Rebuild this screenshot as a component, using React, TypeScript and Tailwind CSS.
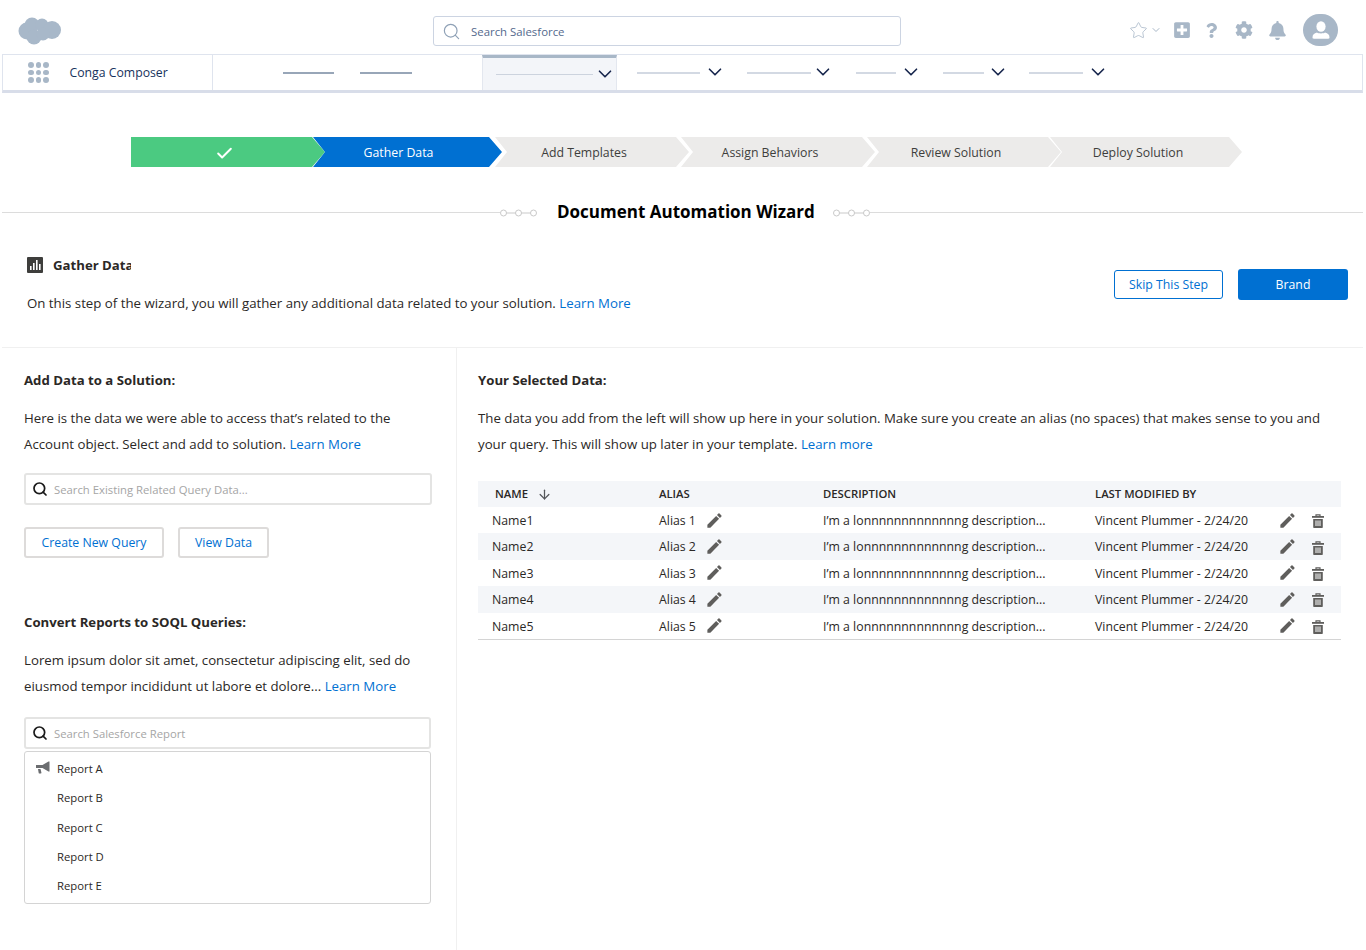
import { ArrowDown, Check, ChevronDown, Search, Star } from "lucide-react";
import { FaBell, FaCog, FaPlusSquare, FaQuestion } from "react-icons/fa";
import { MdEdit } from "react-icons/md";

const navItems = [
  { line: 97, ml: "", chevron: "ml-[1px]", active: true },
  { line: 63, ml: "ml-[20px]", chevron: "ml-[4px]" },
  { line: 64, ml: "ml-[21px]", chevron: "ml-[1px]" },
  { line: 40, ml: "ml-[22px]", chevron: "ml-[4px]" },
  { line: 41, ml: "ml-[21px]", chevron: "ml-[3px]" },
  { line: 54, ml: "ml-[20px]", chevron: "ml-[4px]" },
];

const steps = [
  { label: "", w: "w-[194px]", ml: "ml-[131px]", cls: "bg-[#4bca81] text-white pr-[8px]", first: true },
  { label: "Gather Data", w: "w-[189px]", ml: "-ml-[12px]", cls: "bg-[#0070d2] text-white pr-[18px]" },
  { label: "Add Templates", w: "w-[194px]", ml: "-ml-[7px]", cls: "bg-[#ecebea] text-[#3e3e3c] pr-[16px]" },
  { label: "Assign Behaviors", w: "w-[194px]", ml: "-ml-[8px]", cls: "bg-[#ecebea] text-[#3e3e3c] pr-[16px]" },
  { label: "Review Solution", w: "w-[194px]", ml: "-ml-[8px]", cls: "bg-[#ecebea] text-[#3e3e3c] pr-[16px]" },
  { label: "Deploy Solution", w: "w-[192px]", ml: "-ml-[11px]", cls: "bg-[#ecebea] text-[#3e3e3c] pr-[16px]" },
];

const rows = [
  { name: "Name1", alias: "Alias 1" },
  { name: "Name2", alias: "Alias 2" },
  { name: "Name3", alias: "Alias 3" },
  { name: "Name4", alias: "Alias 4" },
  { name: "Name5", alias: "Alias 5" },
];

function CloudLogo() {
  return (
    <svg width="44" height="28" viewBox="0 0 44 28" fill="#a8b8c9">
      <circle cx="9" cy="14" r="8.5" />
      <circle cx="14" cy="8" r="7.5" />
      <circle cx="24" cy="8" r="6.5" />
      <circle cx="34" cy="13" r="9" />
      <circle cx="16" cy="20" r="7.5" />
      <circle cx="25" cy="17" r="6.5" />
    </svg>
  );
}

function Waffle() {
  return (
    <div className="grid grid-cols-3 gap-[2px]">
      {Array.from({ length: 9 }).map((_, i) => (
        <span key={i} className="h-[5.5px] w-[5.5px] rounded-full bg-[#a8b7c7]" />
      ))}
    </div>
  );
}

function Ornament() {
  return (
    <svg width="37" height="8" viewBox="0 0 37 8" fill="none" stroke="#c9c9c9" className="mt-[2px]">
      <circle cx="3.500" cy="4" r="3" />
      <circle cx="18.500" cy="4" r="3" />
      <circle cx="33.500" cy="4" r="3" />
      <path d="M6.500 4h9M21.500 4h9" />
    </svg>
  );
}

function ChartIcon() {
  return (
    <svg width="16" height="16" viewBox="0 0 16 16">
      <rect width="16" height="16" rx="1" fill="#3e3e3c" />
      <path d="M3 9h1.600v4H3zM6 6h1.600v7H6zM9 3h1.600v10H9zM12 7h1.600v6H12z" fill="#fff" />
    </svg>
  );
}

function BullhornIcon() {
  return (
    <svg width="14" height="14" viewBox="0 0 14 14" fill="#6b6d70" className="-mt-[3px]">
      <path d="M0 4h6.500L12.500.5h1v10h-1L6.500 7H0z" />
      <path d="M2 8h2.500l.9 3.500a.8.8 0 0 1-.8 1H3.500a.8.8 0 0 1-.8-.6z" />
    </svg>
  );
}

function TrashIcon() {
  return (
    <svg width="12" height="14" viewBox="0 0 12 14" className="ml-[15px]">
      <path d="M4 2V.8h4V2" fill="none" stroke="#5f5e5c" strokeWidth="1.200" />
      <rect y="2" width="12" height="1.800" fill="#5f5e5c" />
      <path d="M1.200 5h9.600v8.200a.8.8 0 0 1-.8.800H2a.8.8 0 0 1-.8-.8z" fill="#5f5e5c" />
      <path d="M3.500 6.500h1v5.500h-1zM5.500 6.500h1v5.500h-1zM7.500 6.500h1v5.500h-1z" fill="#fff" />
    </svg>
  );
}

function AvatarIcon() {
  return (
    <div className="flex h-[32px] w-[35px] items-center justify-center rounded-full bg-[#a8b7c7]">
      <svg width="20" height="20" viewBox="0 0 20 20" fill="#fff">
        <ellipse cx="10" cy="6.500" rx="4.600" ry="5.300" />
        <path d="M1.500 17.500c0-3 1.600-4 4.500-5 1.200 1.200 6.800 1.200 8 0 2.900 1 4.500 2 4.500 5 0 .8-.6 1.200-1.200 1.200H2.700c-.6 0-1.200-.4-1.200-1.200z" />
      </svg>
    </div>
  );
}

function OutlineButton({ label, className }: { label: string; className: string }) {
  return (
    <button className={`flex h-[31px] items-center justify-center rounded-[3px] border-2 border-[#dddbda] bg-white pt-[2px] text-[12.3px] text-[#0070d2] ${className}`}>
      {label}
    </button>
  );
}

function SearchField({ placeholder }: { placeholder: string }) {
  return (
    <div className="flex h-[32px] items-center rounded-[3px] border-2 border-[#e4e4e3] bg-white pl-[6px] text-[11.3px] text-[#a5a5a5]">
      <Search size={16} strokeWidth={2.6} className="text-[#1a1a1a]" />
      <span className="ml-[6px] pt-[3px]">{placeholder}</span>
    </div>
  );
}

export default function App() {
  return (
    <div className="h-[950px] w-full overflow-hidden bg-white font-['Open_Sans',sans-serif] text-[#2b2826]">
      <header className="flex h-[54px] items-center">
        <div className="ml-[18px] mt-[7px] w-[415px]">
          <CloudLogo />
        </div>
        <div className="mt-[8px] flex h-[30px] w-[468px] items-center rounded-[3px] border border-[#ccd4e2] pl-[8px] text-[11.400px] text-[#54698d]">
          <Search size={19} strokeWidth={1.500} className="text-[#8fa1b6]" />
          <span className="ml-[10px] pt-[1px]">Search Salesforce</span>
        </div>
        <div className="ml-[228px] mt-[6px] flex items-center text-[#a8b7c7]">
          <Star size={19} strokeWidth={1} />
          <ChevronDown size={12} className="ml-[2px]" />
          <FaPlusSquare size={18} className="ml-[11px]" />
          <FaQuestion size={15} className="ml-[13px]" />
          <FaCog size={18} className="ml-[16px]" />
          <FaBell size={19} className="ml-[15px]" />
          <div className="ml-[16px]">
            <AvatarIcon />
          </div>
        </div>
      </header>

      <nav className="ml-[2px] mr-[3px] flex h-[39px] items-stretch border border-b-[3px] border-[#dfe4ee] border-b-[#d8dde9]">
        <div className="flex w-[210px] items-center border-r border-[#dfe4ee] pl-[25px]">
          <Waffle />
          <span className="ml-[21px] pt-[1px] text-[12.250px] text-[#16325c]">Conga Composer</span>
        </div>
        <div className="ml-[70px] flex items-center">
          <span className="h-[2px] w-[51px] bg-[#98a6b8]" />
          <span className="ml-[26px] h-[2px] w-[52px] bg-[#98a6b8]" />
        </div>
        <div className="ml-[70px] flex items-center">
          {navItems.map((item, i) =>
            item.active ? (
              <div key={i} className="flex h-[35px] w-[135px] items-center border-x border-t-[3px] border-[#e3e7ef] border-t-[#a8b7c7] bg-[#f3f5f9] pl-[13px]">
                <span className="h-[1px] bg-[#ccd3de]" style={{ width: item.line }} />
                <ChevronDown size={22} strokeWidth={1.800} className={`${item.chevron} text-[#16254c]`} />
              </div>
            ) : (
              <div key={i} className={`flex items-center ${item.ml}`}>
                <span className="h-[2px] bg-[#d3d9e3]" style={{ width: item.line }} />
                <ChevronDown size={22} strokeWidth={1.800} className={`${item.chevron} mb-[2px] text-[#16254c]`} />
              </div>
            )
          )}
        </div>
      </nav>

      <div className="mt-[44px] flex h-[30px]">
        {steps.map((step, i) => (
          <div
            key={i}
            className={`flex shrink-0 items-center justify-center pt-[2px] text-[12.300px] ${step.w} ${step.ml} ${step.cls} ${
              step.first
                ? "[clip-path:polygon(0_0,calc(100%-13px)_0,100%_50%,calc(100%-13px)_100%,0_100%)]"
                : "[clip-path:polygon(0_0,calc(100%-13px)_0,100%_50%,calc(100%-13px)_100%,0_100%,12px_50%)]"
            }`}
          >
            {step.first ? <Check size={19} strokeWidth={2.500} /> : step.label}
          </div>
        ))}
      </div>

      <div className="ml-[2px] mr-[3px] mt-[32px] flex h-[25px] items-center">
        <div className="mt-[2px] h-px w-[498px] bg-[#dcdcdc]" />
        <Ornament />
        <h1 className="ml-[20px] mr-[18px] text-[17px] font-bold text-black">Document Automation Wizard</h1>
        <Ornament />
        <div className="mt-[2px] h-px flex-1 bg-[#dcdcdc]" />
      </div>

      <section className="ml-[2px] mr-[3px] flex h-[124px] items-start justify-between border-b border-[#f0f0f0]">
        <div className="pl-[25px] pt-[32px]">
          <div className="flex h-[18px] items-center">
            <ChartIcon />
            <h2 className="ml-[10px] w-[78px] overflow-hidden whitespace-nowrap pt-[1px] text-[13.200px] font-bold">Gather Data</h2>
          </div>
          <p className="mt-[19px] text-[13.250px] leading-[20px]">
            On this step of the wizard, you will gather any additional data related to your solution.{" "}
            <a className="text-[#0070d2]">Learn More</a>
          </p>
        </div>
        <div className="mr-[15px] mt-[45px] flex items-center gap-[15px]">
          <button className="flex h-[29px] w-[109px] items-center justify-center rounded-[3px] border-[1.500px] border-[#0070d2] bg-white pt-[2px] text-[12.300px] text-[#0070d2]">
            Skip This Step
          </button>
          <button className="flex h-[31px] w-[110px] items-center justify-center rounded-[3px] bg-[#0070d2] pt-[2px] text-[12.300px] text-white">
            Brand
          </button>
        </div>
      </section>

      <div className="ml-[2px] mr-[3px] flex">
        <aside className="h-[602px] w-[455px] shrink-0 border-r border-[#f0f0f0] pl-[22px]">
          <h3 className="mt-[22px] text-[13.200px] font-bold leading-[20px]">Add Data to a Solution:</h3>
          <p className="mt-[15px] w-[400px] text-[13.250px] leading-[26px]">
            Here is the data we were able to access that’s related to the Account object. Select and add to solution.{" "}
            <a className="text-[#0070d2]">Learn More</a>
          </p>
          <div className="mt-[16px] w-[408px]">
            <SearchField placeholder="Search Existing Related Query Data..." />
          </div>
          <div className="mt-[22px] flex gap-[14px]">
            <OutlineButton label="Create New Query" className="w-[140px]" />
            <OutlineButton label="View Data" className="w-[91px]" />
          </div>

          <h3 className="mt-[54px] text-[13.200px] font-bold leading-[20px]">Convert Reports to SOQL Queries:</h3>
          <p className="mt-[15px] w-[400px] text-[13.250px] leading-[26px]">
            Lorem ipsum dolor sit amet, consectetur adipiscing elit, sed do eiusmod tempor incididunt ut labore et dolore...{" "}
            <a className="text-[#0070d2]">Learn More</a>
          </p>
          <div className="mt-[18px] w-[407px]">
            <SearchField placeholder="Search Salesforce Report" />
          </div>
          <div className="mt-[2px] h-[153px] w-[407px] rounded-[3px] border border-[#d4d4d4] pt-[3px] text-[11.300px]">
            {["Report A", "Report B", "Report C", "Report D", "Report E"].map((report, i) => (
              <div key={report} className="flex h-[29.300px] items-center pl-[11px]">
                <span className="flex w-[21px] items-center">{i === 0 && <BullhornIcon />}</span>
                {report}
              </div>
            ))}
          </div>
        </aside>

        <main className="flex-1 pl-[21px] pr-[22px]">
          <h3 className="mt-[22px] text-[13.200px] font-bold leading-[20px]">Your Selected Data:</h3>
          <p className="mt-[15px] text-[13.250px] leading-[26px]">
            The data you add from the left will show up here in your solution. Make sure you create an alias (no spaces) that makes sense to you and your query. This will show up later in your template.{" "}
            <a className="text-[#0070d2]">Learn more</a>
          </p>
          <div className="mt-[24px] border-b border-[#d4d4d4] text-[12.300px]">
            <div className="grid h-[26px] grid-cols-[181px_164px_272px_1fr] items-center bg-[#f4f6f9] text-[11.300px] font-semibold">
              <div className="flex items-center pl-[17px]">
                NAME
                <ArrowDown size={15} strokeWidth={2} className="ml-[9px] text-[#54565a]" />
              </div>
              <div>ALIAS</div>
              <div>DESCRIPTION</div>
              <div>LAST MODIFIED BY</div>
            </div>
            {rows.map((row, i) => (
              <div
                key={row.name}
                className={`grid h-[26.400px] grid-cols-[181px_164px_272px_1fr] items-center pt-[2px] ${i % 2 === 1 ? "bg-[#f4f6f9]" : "bg-white"}`}
              >
                <div className="pl-[14px]">{row.name}</div>
                <div className="flex items-center">
                  {row.alias}
                  <MdEdit size={19} className="-mt-[2px] ml-[9px] text-[#5f5e5c]" />
                </div>
                <div>I’m a lonnnnnnnnnnnnng description...</div>
                <div className="flex items-center">
                  <span className="w-[183px]">Vincent Plummer - 2/24/20</span>
                  <MdEdit size={19} className="-mt-[2px] text-[#5f5e5c]" />
                  <TrashIcon />
                </div>
              </div>
            ))}
          </div>
        </main>
      </div>
    </div>
  );
}
